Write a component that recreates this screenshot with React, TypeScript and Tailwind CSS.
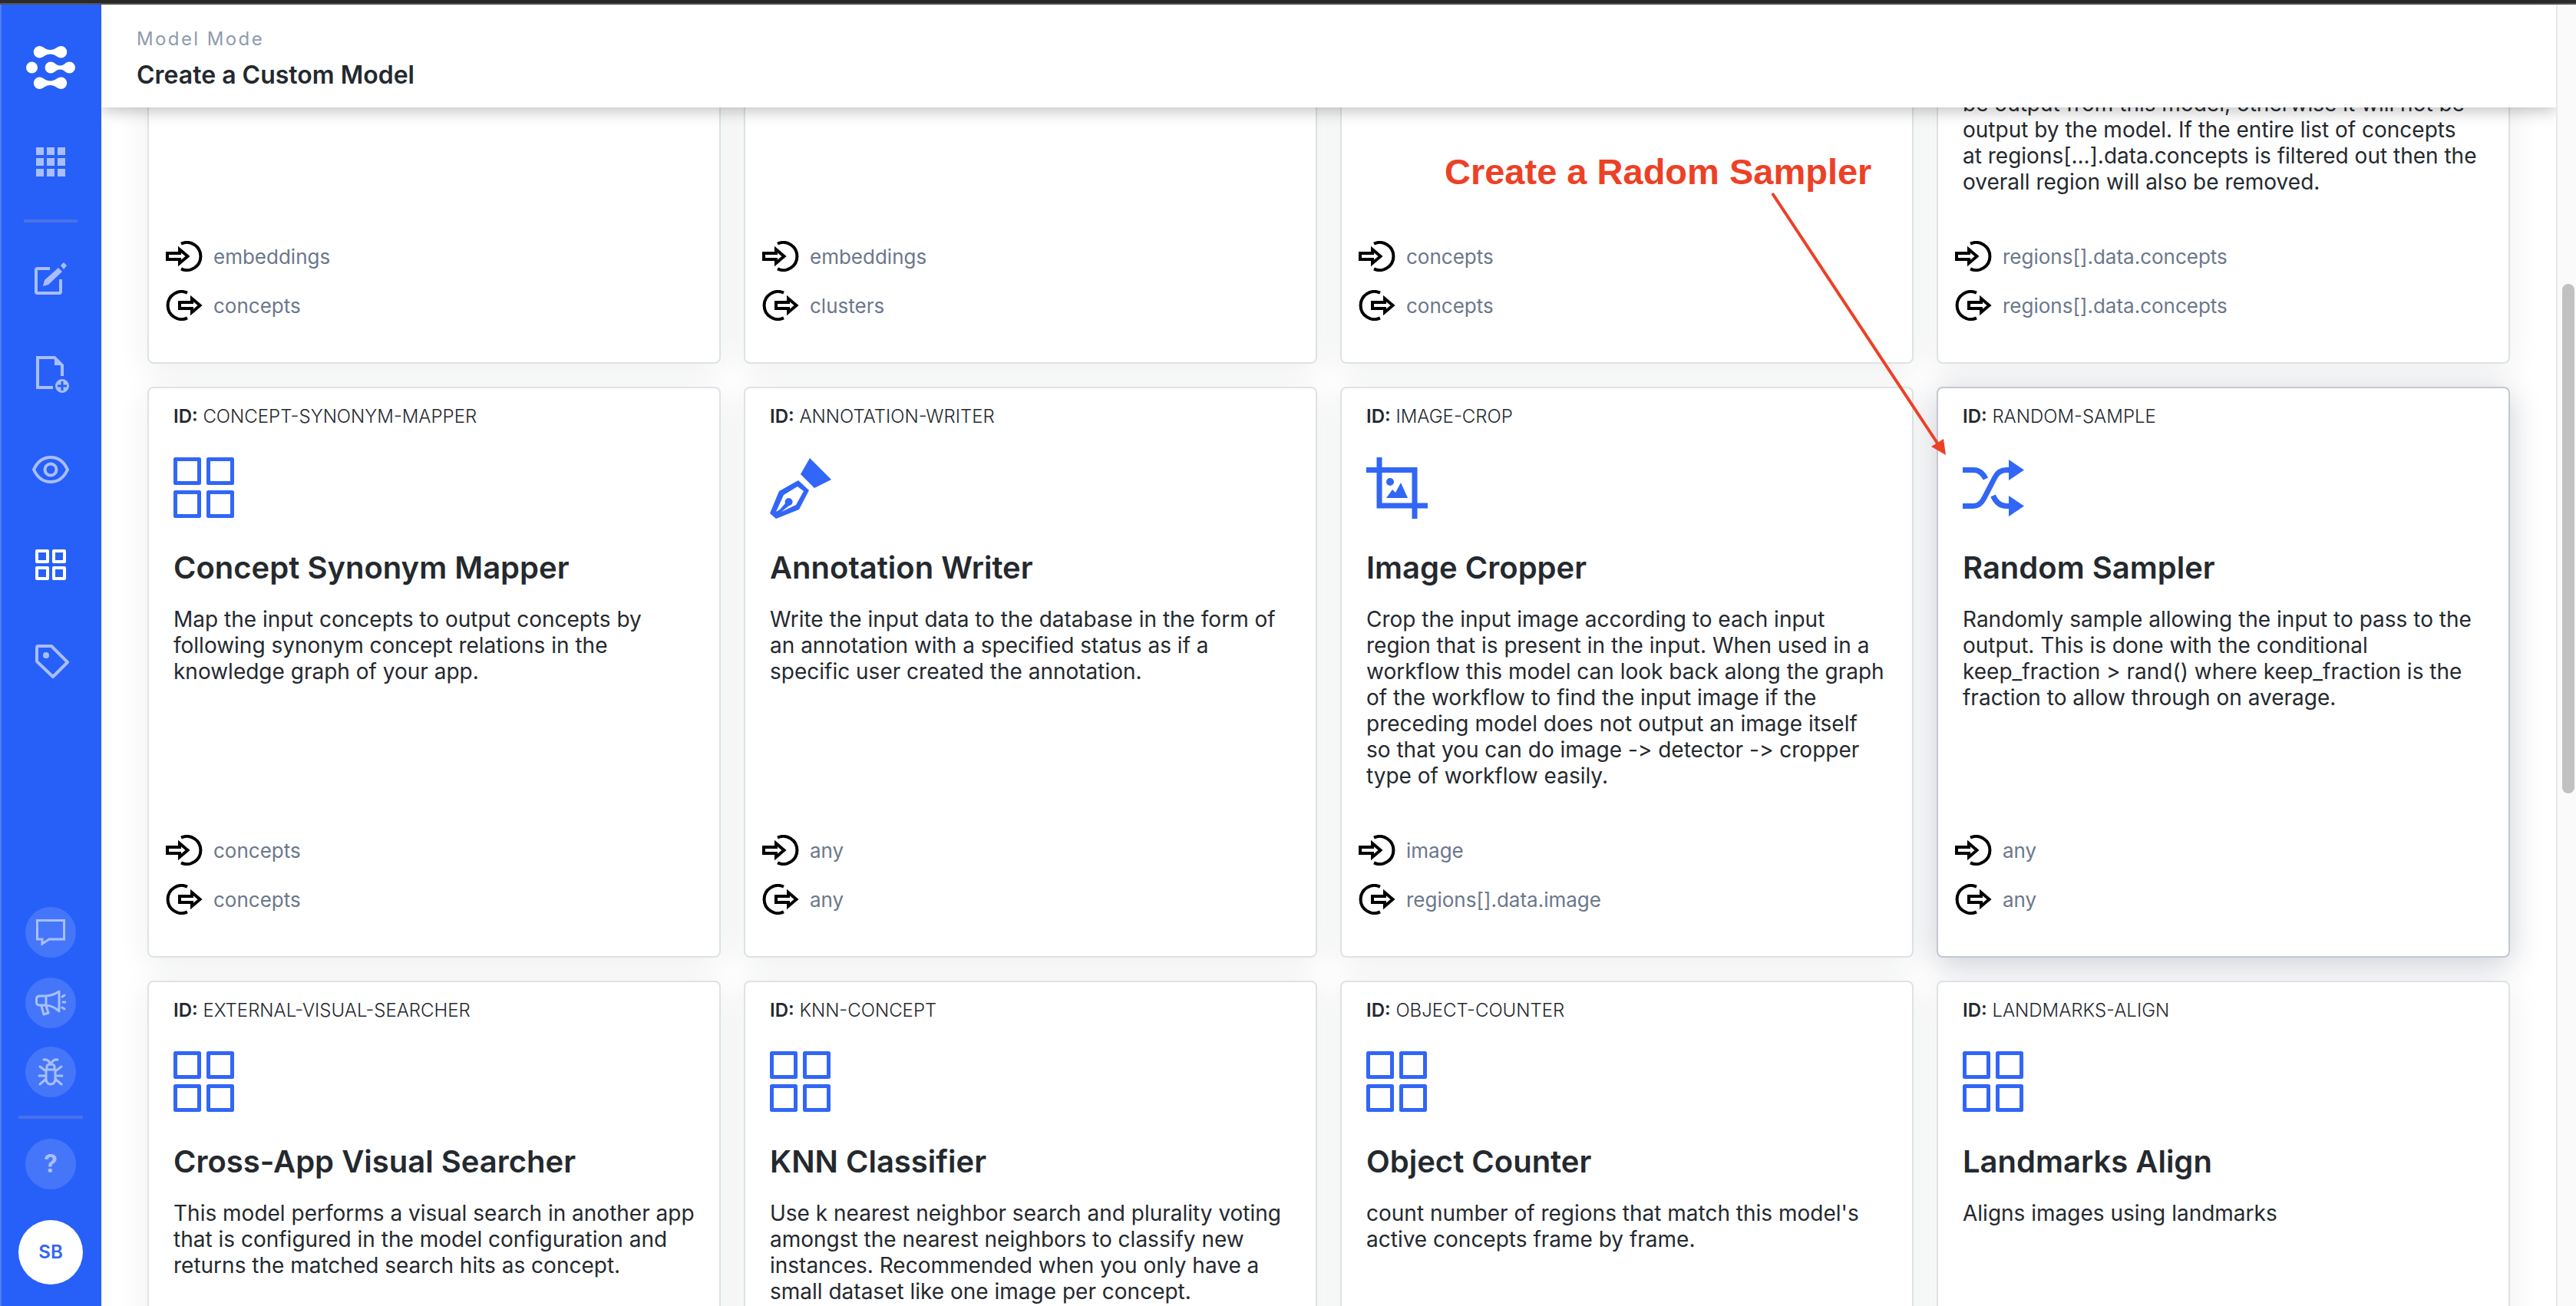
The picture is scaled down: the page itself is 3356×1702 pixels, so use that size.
import React from "react";

const cls = "h-[80px] w-[80px]";

function GridIcon() {
  return (
    <svg viewBox="0 0 80 80" className={cls} fill="none" stroke="#3166f6" strokeWidth="5" strokeLinejoin="round" aria-hidden="true">
      <rect x="2.5" y="2.5" width="31" height="31" />
      <rect x="45.5" y="2.5" width="31" height="31" />
      <rect x="2.5" y="45.5" width="31" height="31" />
      <rect x="45.5" y="45.5" width="31" height="31" />
    </svg>
  );
}

function PenIcon() {
  return (
    <svg viewBox="0 0 80 80" className={cls} fill="#3166f6" aria-hidden="true">
      <path d="M52 1 80 29 58 40 40 22Z" />
      <path fillRule="evenodd" d="M37 30 51 43 38 68 8 80 0 73 12 44ZM36 38 18 49 8 71 13 68 20 60A5 5 0 1 1 25 63L15 71 34 62 44 44Z" />
    </svg>
  );
}

function CropIcon() {
  return (
    <svg viewBox="0 0 80 80" className={cls} fill="none" stroke="#3166f6" strokeWidth="7" aria-hidden="true">
      <path d="M0 16.5H63V80M17 0V63H80" />
      <circle cx="31" cy="32" r="5" fill="#3166f6" stroke="none" />
      <path d="M26 53 34 42 38 46 45 33 54 53Z" fill="#3166f6" stroke="none" />
    </svg>
  );
}

function ShuffleIcon() {
  return (
    <svg viewBox="0 0 80 80" className={cls} fill="none" stroke="#3166f6" strokeWidth="7" aria-hidden="true">
      <path d="M0 63.5H14C21 63.5 25 59 28 53L42 26C45 20 50 16.5 57 16.5H62" />
      <path d="M0 16.5H14C21 16.5 26 20 30 28" />
      <path d="M39.500 50C43 58 48 63.500 57 63.500H62" />
      <path d="M60 3 80 16.500 60 30ZM60 50 80 63.500 60 77Z" fill="#3166f6" stroke="none" />
    </svg>
  );
}

function InIcon() {
  return (
    <svg viewBox="0 0 48 40" className="h-10 w-12" fill="none" stroke="#000" strokeWidth="4" aria-hidden="true">
      <path d="M20 3.6A18 18 0 1 1 20 36.4" />
      <path d="M2 16H18V11L28.500 20 18 29V24H2Z" />
    </svg>
  );
}

function OutIcon() {
  return (
    <svg viewBox="0 0 48 40" className="h-10 w-12" fill="none" stroke="#000" strokeWidth="4" aria-hidden="true">
      <path d="M28 3.6A18 18 0 1 0 28 36.400" />
      <path d="M18 16H34V11L44.500 20 34 29V24H18Z" />
    </svg>
  );
}

type Model = {
  id: string;
  title: string;
  text: string;
  input: string;
  output: string;
  Icon: () => React.JSX.Element;
  active?: boolean;
};

const models: Model[] = [
  { id: "EMBEDDING-CLASSIFIER", title: "Transfer Learn", text: "Classify images or text based on the embedding model that has indexed them in your app.", input: "embeddings", output: "concepts", Icon: GridIcon },
  { id: "CLUSTERER", title: "Clusterer", text: "Cluster using embeddings to improve search results on large scale data.", input: "embeddings", output: "clusters", Icon: GridIcon },
  { id: "CONCEPT-THRESHOLDER", title: "Concept Thresholder", text: "Threshold input concepts according to both a threshold and an operator.", input: "concepts", output: "concepts", Icon: GridIcon },
  { id: "REGION-THRESHOLDER", title: "Region Thresholder", text: "Threshold regions based on their concepts\nusing a threshold per concept. If the value\nis above the threshold, the concept will\nbe output from this model, otherwise it will not be output by the model. If the entire list of concepts\nat regions[...].data.concepts is filtered out then the overall region will also be removed.", input: "regions[].data.concepts", output: "regions[].data.concepts", Icon: GridIcon },
  { id: "CONCEPT-SYNONYM-MAPPER", title: "Concept Synonym Mapper", text: "Map the input concepts to output concepts by following synonym concept relations in the knowledge graph of your app.", input: "concepts", output: "concepts", Icon: GridIcon },
  { id: "ANNOTATION-WRITER", title: "Annotation Writer", text: "Write the input data to the database in the form of an annotation with a specified status as if a\nspecific user created the annotation.", input: "any", output: "any", Icon: PenIcon },
  { id: "IMAGE-CROP", title: "Image Cropper", text: "Crop the input image according to each input region that is present in the input. When used in a workflow this model can look back along the graph of the workflow to find the input image if the preceding model does not output an image itself\nso that you can do image -> detector -> cropper\ntype of workflow easily.", input: "image", output: "regions[].data.image", Icon: CropIcon },
  { id: "RANDOM-SAMPLE", title: "Random Sampler", text: "Randomly sample allowing the input to pass to the output. This is done with the conditional keep_fraction > rand() where keep_fraction is the fraction to allow through on average.", input: "any", output: "any", Icon: ShuffleIcon, active: true },
  { id: "EXTERNAL-VISUAL-SEARCHER", title: "Cross-App Visual Searcher", text: "This model performs a visual search in another app that is configured in the model configuration and returns the matched search hits as concept.", input: "image", output: "concepts", Icon: GridIcon },
  { id: "KNN-CONCEPT", title: "KNN Classifier", text: "Use k nearest neighbor search and plurality voting amongst the nearest neighbors to classify new instances. Recommended when you only have a small dataset like one image per concept.", input: "embeddings", output: "concepts", Icon: GridIcon },
  { id: "OBJECT-COUNTER", title: "Object Counter", text: "count number of regions that match this model's active concepts frame by frame.", input: "regions", output: "metadata", Icon: GridIcon },
  { id: "LANDMARKS-ALIGN", title: "Landmarks Align", text: "Aligns images using landmarks", input: "image", output: "image", Icon: GridIcon },
];

function ModelCard({ id, title, text, input, output, Icon, active }: Model) {
  return (
    <article
      className={
        active
          ? "flex h-[744px] flex-col rounded-lg border-2 border-[#c3c8d0] bg-white pt-[22px] pr-6 pb-[42px] pl-8 shadow-[0_8px_40px_rgba(30,40,70,0.24)]"
          : "flex h-[744px] flex-col rounded-lg border-2 border-[#dee2e6] bg-white pt-[22px] pr-6 pb-[42px] pl-8 shadow-[0_8px_40px_rgba(30,40,50,0.08)]"
      }
    >
      <p className="text-2xl leading-[30px] font-light">
        <b className="font-semibold">ID:</b> {id}
      </p>
      <div className="mt-[38px]">
        <Icon />
      </div>
      <h2 className="mt-10 text-[40px] leading-[48px] font-semibold">{title}</h2>
      <p className="mt-[26px] grow text-[28px] leading-[34px] whitespace-pre-line [font-variant-ligatures:no-contextual]">{text}</p>
      <dl className="-ml-2.5 text-[26px] text-[#6b778c]">
        <div className="flex h-16 items-center gap-3.5">
          <dt aria-label="Input">
            <InIcon />
          </dt>
          <dd>{input}</dd>
        </div>
        <div className="flex h-16 items-center gap-3.5">
          <dt aria-label="Output">
            <OutIcon />
          </dt>
          <dd>{output}</dd>
        </div>
      </dl>
    </article>
  );
}

const round = "flex h-[66px] w-[66px] items-center justify-center rounded-full bg-[#4576fa] text-[#a8bffd]";

function Sidebar() {
  return (
    <aside className="z-20 flex w-[132px] shrink-0 flex-col items-center bg-[#2760f9] text-[#a9befd] shadow-[inset_2px_0_0_#4f7cf8]">
      <a href="#home" aria-label="Home" className="mt-[54px]">
        <svg viewBox="0 0 64 56" className="h-14 w-16" fill="#fff">
          <path d="M17.500 0C22 0 25 5 31.500 5S41 0 45.500 0A7.750 7.750 0 0 1 45.500 15.500C41 15.500 38 10.500 31.500 10.500S22 15.500 17.500 15.500A7.750 7.750 0 0 1 17.500 0Z" />
          <path d="M17.500 40.500C22 40.500 25 45.500 31.500 45.500S41 40.500 45.500 40.500A7.750 7.750 0 0 1 45.500 56C41 56 38 51 31.500 51S22 56 17.500 56A7.750 7.750 0 0 1 17.500 40.500Z" />
          <circle cx="7.500" cy="28" r="7.500" />
          <path d="M32 20.500C37 20.500 39 25.500 44.500 25.500S51 20.500 56.500 20.500A7.500 7.500 0 0 1 56.500 35.500C51 35.500 50 30.500 44.500 30.500S37 35.500 32 35.500A7.500 7.500 0 0 1 32 20.500Z" />
        </svg>
      </a>
      <nav className="flex flex-col items-center">
        <a href="#apps" aria-label="Apps" className="mt-[76px]">
          <svg viewBox="0 0 38 38" className="h-[38px] w-[38px]" fill="currentColor">
            <path d="M0 0h10v10H0zM14 0h10v10H14zM28 0h10v10H28zM0 14h10v10H0zM14 14h10v10H14zM28 14h10v10H28zM0 28h10v10H0zM14 28h10v10H14zM28 28h10v10H28z" />
          </svg>
        </a>
        <hr className="mt-14 w-[70px] border-t-4 border-[#4b70e8]" />
        <a href="#edit" aria-label="Edit" className="mt-[52px]">
          <svg viewBox="0 0 42 42" className="h-[42px] w-[42px]" fill="none" stroke="currentColor" strokeWidth="4">
            <path d="M20 8H4Q2 8 2 10V38Q2 40 4 40H32Q34 40 34 38V22" />
            <path d="M11 31 13 23 31 7 36 12 18 29Z" fill="currentColor" stroke="none" />
            <path d="M34 4 38 0 42 4 38 9Z" fill="currentColor" stroke="none" />
          </svg>
        </a>
        <a href="#add" aria-label="Add input" className="mt-20 ml-1.5">
          <svg viewBox="0 0 44 48" className="h-12 w-11" fill="none" stroke="currentColor" strokeWidth="4">
            <path d="M22 41H2V2H24L34 12V26" />
            <path d="M24 0V12H36Z" fill="currentColor" stroke="none" />
            <circle cx="34" cy="39" r="9" fill="currentColor" stroke="none" />
            <path d="M34 33V45M28 39H40" stroke="#2760f9" strokeWidth="3" />
          </svg>
        </a>
        <a href="#explore" aria-label="Explore" className="mt-[82px]">
          <svg viewBox="0 0 48 36" className="h-9 w-12" fill="none" stroke="currentColor" strokeWidth="4">
            <path d="M2 18C7 7 15 2 24 2S41 7 46 18C41 29 33 34 24 34S7 29 2 18Z" strokeLinejoin="round" />
            <circle cx="24" cy="18" r="7.500" />
          </svg>
        </a>
        <a href="#models" aria-label="Models" className="mt-[86px]">
          <svg viewBox="0 0 40 40" className="h-10 w-10" fill="none" stroke="#fff" strokeWidth="4" strokeLinejoin="round">
            <rect x="2" y="2" width="14" height="14" />
            <rect x="24" y="2" width="14" height="14" />
            <rect x="2" y="24" width="14" height="14" />
            <rect x="24" y="24" width="14" height="14" />
          </svg>
        </a>
        <a href="#tags" aria-label="Labels" className="mt-[84px] ml-1">
          <svg viewBox="0 0 44 44" className="h-11 w-11" fill="none" stroke="currentColor" strokeWidth="4" strokeLinejoin="round">
            <path d="M2 4Q2 2 4 2H21L42 23 23 42 2 22Z" />
            <circle cx="14" cy="14" r="4" fill="currentColor" stroke="none" />
          </svg>
        </a>
      </nav>
      <div className="mt-auto mb-7 flex flex-col items-center">
        <button type="button" aria-label="Chat" className={round}>
          <svg viewBox="0 0 38 36" className="h-9 w-[38px]" fill="none" stroke="currentColor" strokeWidth="3">
            <path d="M1.500 2.500H36.500V27H17L8 33V27H1.500Z" />
          </svg>
        </button>
        <button type="button" aria-label="Announcements" className={round + " mt-[26px]"}>
          <svg viewBox="0 0 40 34" className="h-[34px] w-10" fill="none" stroke="currentColor" strokeWidth="3" strokeLinecap="round" strokeLinejoin="round">
            <path d="M14 8H6Q1.500 8 1.500 12V16Q1.500 20 6 20H14ZM14 8Q24 7 31 2V28Q24 21 14 20M8 21 11 32 17 30 14 21M35 9 38 7M36 16H39M35 23 38 25" />
          </svg>
        </button>
        <button type="button" aria-label="Report a bug" className={round + " mt-6"}>
          <svg viewBox="0 0 34 36" className="h-9 w-[34px]" fill="none" stroke="currentColor" strokeWidth="3" strokeLinecap="round" strokeLinejoin="round">
            <path d="M11 15H23V26Q23 34 17 34T11 26ZM12 15V11Q12 8 17 8T22 11V15M8 2Q14 1 17 8Q20 1 26 2M11 17 3 11M23 17 31 11M11 23H2M23 23H32M11 27 3 34M23 27 31 34" />
          </svg>
        </button>
        <hr className="mt-6 w-[84px] border-t-4 border-[#4b70e8]" />
        <button type="button" aria-label="Help" className={round + " mt-[26px] text-[32px] font-bold"}>
          ?
        </button>
        <button type="button" className="mt-10 flex h-[84px] w-[84px] items-center justify-center rounded-full bg-white text-2xl font-semibold text-[#3166f6]">
          SB
        </button>
      </div>
    </aside>
  );
}

export default function App() {
  return (
    <div className="relative flex h-screen flex-col overflow-hidden bg-white font-['Inter',sans-serif] text-[#24292e]">
      <div className="h-1.5 shrink-0 border-b-2 border-[#555] bg-[#2b2b2b]" />
      <div className="flex min-h-0 grow">
        <Sidebar />
        <div className="flex min-w-0 grow flex-col">
          <header className="z-10 h-[134px] shrink-0 bg-white px-[46px] pt-[30px] shadow-[0_4px_20px_rgba(0,0,0,0.26)]">
            <p className="text-2xl leading-[30px] tracking-widest text-[#8f9bae]">Model Mode</p>
            <h1 className="mt-3 text-[32px] leading-10 font-semibold">Create a Custom Model</h1>
          </header>
          <main className="min-h-0 grow overflow-hidden">
            <div className="-mt-[410px] grid grid-cols-4 gap-[30px] px-[60px]">
              {models.map((m) => (
                <ModelCard key={m.id} {...m} />
              ))}
            </div>
          </main>
        </div>
        <div className="z-10 w-[26px] shrink-0 border-l-2 border-[#e8e8e8] bg-[#fafafa] pt-[364px] pl-1.5">
          <div className="h-[664px] w-4 rounded-full bg-[#c1c1c1]" />
        </div>
      </div>
      <div className="absolute top-[194px] left-[1882px] z-30 font-['Liberation_Sans',sans-serif] text-[47px] leading-[60px] font-bold text-[#ec4126]">
        Create a Radom Sampler
        <svg viewBox="0 0 240 360" className="absolute top-[50px] left-[420px] h-[360px] w-[240px]" aria-hidden="true">
          <path d="M7 8 223 335" stroke="#ec4126" strokeWidth="4" />
          <path d="M233 349 214 338 230 328Z" fill="#ec4126" />
        </svg>
      </div>
    </div>
  );
}
